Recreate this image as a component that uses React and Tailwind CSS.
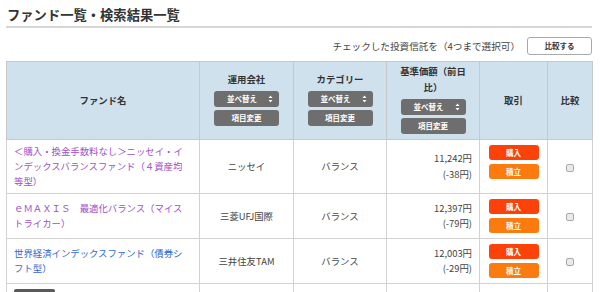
import React from "react";

const funds = [
  {
    lines: ["＜購入・換金手数料なし＞ニッセイ・イ", "ンデックスバランスファンド（４資産均", "等型）"],
    color: "text-[#9d50c8]",
    company: "ニッセイ",
    category: "バランス",
    price: "11,242円",
    diff: "(-38円)",
  },
  {
    lines: ["ｅＭＡＸＩＳ　最適化バランス（マイス", "トライカー）"],
    color: "text-[#9d50c8]",
    company: "三菱UFJ国際",
    category: "バランス",
    price: "12,397円",
    diff: "(-79円)",
  },
  {
    lines: ["世界経済インデックスファンド（債券シ", "フト型）"],
    color: "text-[#2f68d4]",
    company: "三井住友TAM",
    category: "バランス",
    price: "12,003円",
    diff: "(-29円)",
  },
];

const SortButton = () => (
  <div className="relative flex h-[16px] w-[65px] items-center justify-center rounded-[3px] bg-[#6e6e6e] text-[7.5px] font-bold text-white">
    <span className="-ml-[9px]">並べ替え</span>
    <svg className="absolute right-[6px] top-[4px]" width="5" height="8" viewBox="0 0 5 8">
      <path d="M2.5 0.5 L4.5 3 L0.5 3 Z" fill="#fff" />
      <path d="M2.5 7.5 L4.5 5 L0.5 5 Z" fill="#fff" />
    </svg>
  </div>
);

const ItemButton = () => (
  <div className="flex h-[16px] w-[65px] items-center justify-center rounded-[3px] bg-[#6e6e6e] text-[7.5px] font-bold text-white">
    項目変更
  </div>
);

const HeadTitle = ({ children }) => (
  <div className="flex flex-col items-center">
    <div className="leading-[16px]">{children}</div>
    <div className="mt-[4px] mb-[5px] flex flex-col gap-[3px]">
      <SortButton />
      <ItemButton />
    </div>
  </div>
);

export default function App() {
  return (
    <div
      className="w-[600px] h-[292px] overflow-hidden bg-white px-[6px] pt-[7px] text-[#444]"
      style={{ fontFamily: '"Noto Sans CJK JP", "Noto Sans", sans-serif' }}
    >
      {/* Title */}
      <div className="w-[586px] border-b-2 border-[#d6d6d6] pb-[3px] pl-[1px] text-[13.3px] font-bold leading-[16px] text-[#333]">
        ファンド一覧・検索結果一覧
      </div>

      {/* Compare row */}
      <div className="mt-[9px] flex w-[586px] items-center justify-end">
        <span className="text-[9.6px] leading-[18px] text-[#444]">
          チェックした投資信託を（4つまで選択可）
        </span>
        <button className="ml-[7px] flex h-[18px] w-[65px] items-center justify-center rounded-[3px] border border-[#a9a9a9] bg-white text-[7.5px] font-bold text-[#333]">
          比較する
        </button>
      </div>

      {/* Table */}
      <table className="mt-[6px] w-[586px] table-fixed border-collapse text-[9.4px]">
        <colgroup>
          <col className="w-[193px]" />
          <col className="w-[94px]" />
          <col className="w-[93px]" />
          <col className="w-[93px]" />
          <col className="w-[68px]" />
          <col className="w-[45px]" />
        </colgroup>
        <thead>
          <tr className="h-[78px] bg-[#cfe1ed] font-bold text-[#333]">
            <th className="border border-[#c8c8c8] align-middle">ファンド名</th>
            <th className="border border-[#c8c8c8] align-middle">
              <HeadTitle>運用会社</HeadTitle>
            </th>
            <th className="border border-[#c8c8c8] align-middle">
              <HeadTitle>カテゴリー</HeadTitle>
            </th>
            <th className="border border-[#c8c8c8] px-[12px] align-middle">
              <HeadTitle>基準価額（前日比）</HeadTitle>
            </th>
            <th className="border border-[#c8c8c8] align-middle">取引</th>
            <th className="border border-[#c8c8c8] align-middle">比較</th>
          </tr>
        </thead>
        <tbody>
          {funds.map((f, i) => (
            <tr key={i}>
              <td className="border border-[#d2d2d2] py-[4px] pl-[7px] align-middle leading-[15px]">
                <a href="#" className={f.color}>
                  {f.lines.map((l, j) => (
                    <span key={j} className="block h-[15px] whitespace-nowrap">
                      {l}
                    </span>
                  ))}
                </a>
              </td>
              <td className="border border-[#d2d2d2] text-center align-middle">{f.company}</td>
              <td className="border border-[#d2d2d2] text-center align-middle">{f.category}</td>
              <td className="border border-[#d2d2d2] pr-[7px] text-right align-middle leading-[15.5px]">
                <div>{f.price}</div>
                <div>{f.diff}</div>
              </td>
              <td className="border border-[#d2d2d2] py-[5px] align-top">
                <div className="flex flex-col items-center gap-[4px]">
                  <div className="flex h-[15px] w-[50px] items-center justify-center rounded-[3px] bg-[#fc4208] text-[7.5px] font-bold text-white">
                    購入
                  </div>
                  <div className="flex h-[15px] w-[50px] items-center justify-center rounded-[3px] bg-[#fb7b0f] text-[7.5px] font-bold text-white">
                    積立
                  </div>
                </div>
              </td>
              <td className="border border-[#d2d2d2] text-center align-middle">
                <input
                  type="checkbox"
                  className="inline-block h-[8px] w-[8px] appearance-none rounded-[2px] border border-[#a8a8a8] bg-[#eaeaea] align-middle"
                />
              </td>
            </tr>
          ))}
          <tr className="h-[40px]">
            <td className="border border-[#d2d2d2] pl-[7px] align-top pt-[5px]">
              <div className="h-[14px] w-[41px] rounded-[2px] bg-[#5a5a5a]" />
            </td>
            <td className="border border-[#d2d2d2]" />
            <td className="border border-[#d2d2d2]" />
            <td className="border border-[#d2d2d2]" />
            <td className="border border-[#d2d2d2]" />
            <td className="border border-[#d2d2d2]" />
          </tr>
        </tbody>
      </table>
    </div>
  );
}
